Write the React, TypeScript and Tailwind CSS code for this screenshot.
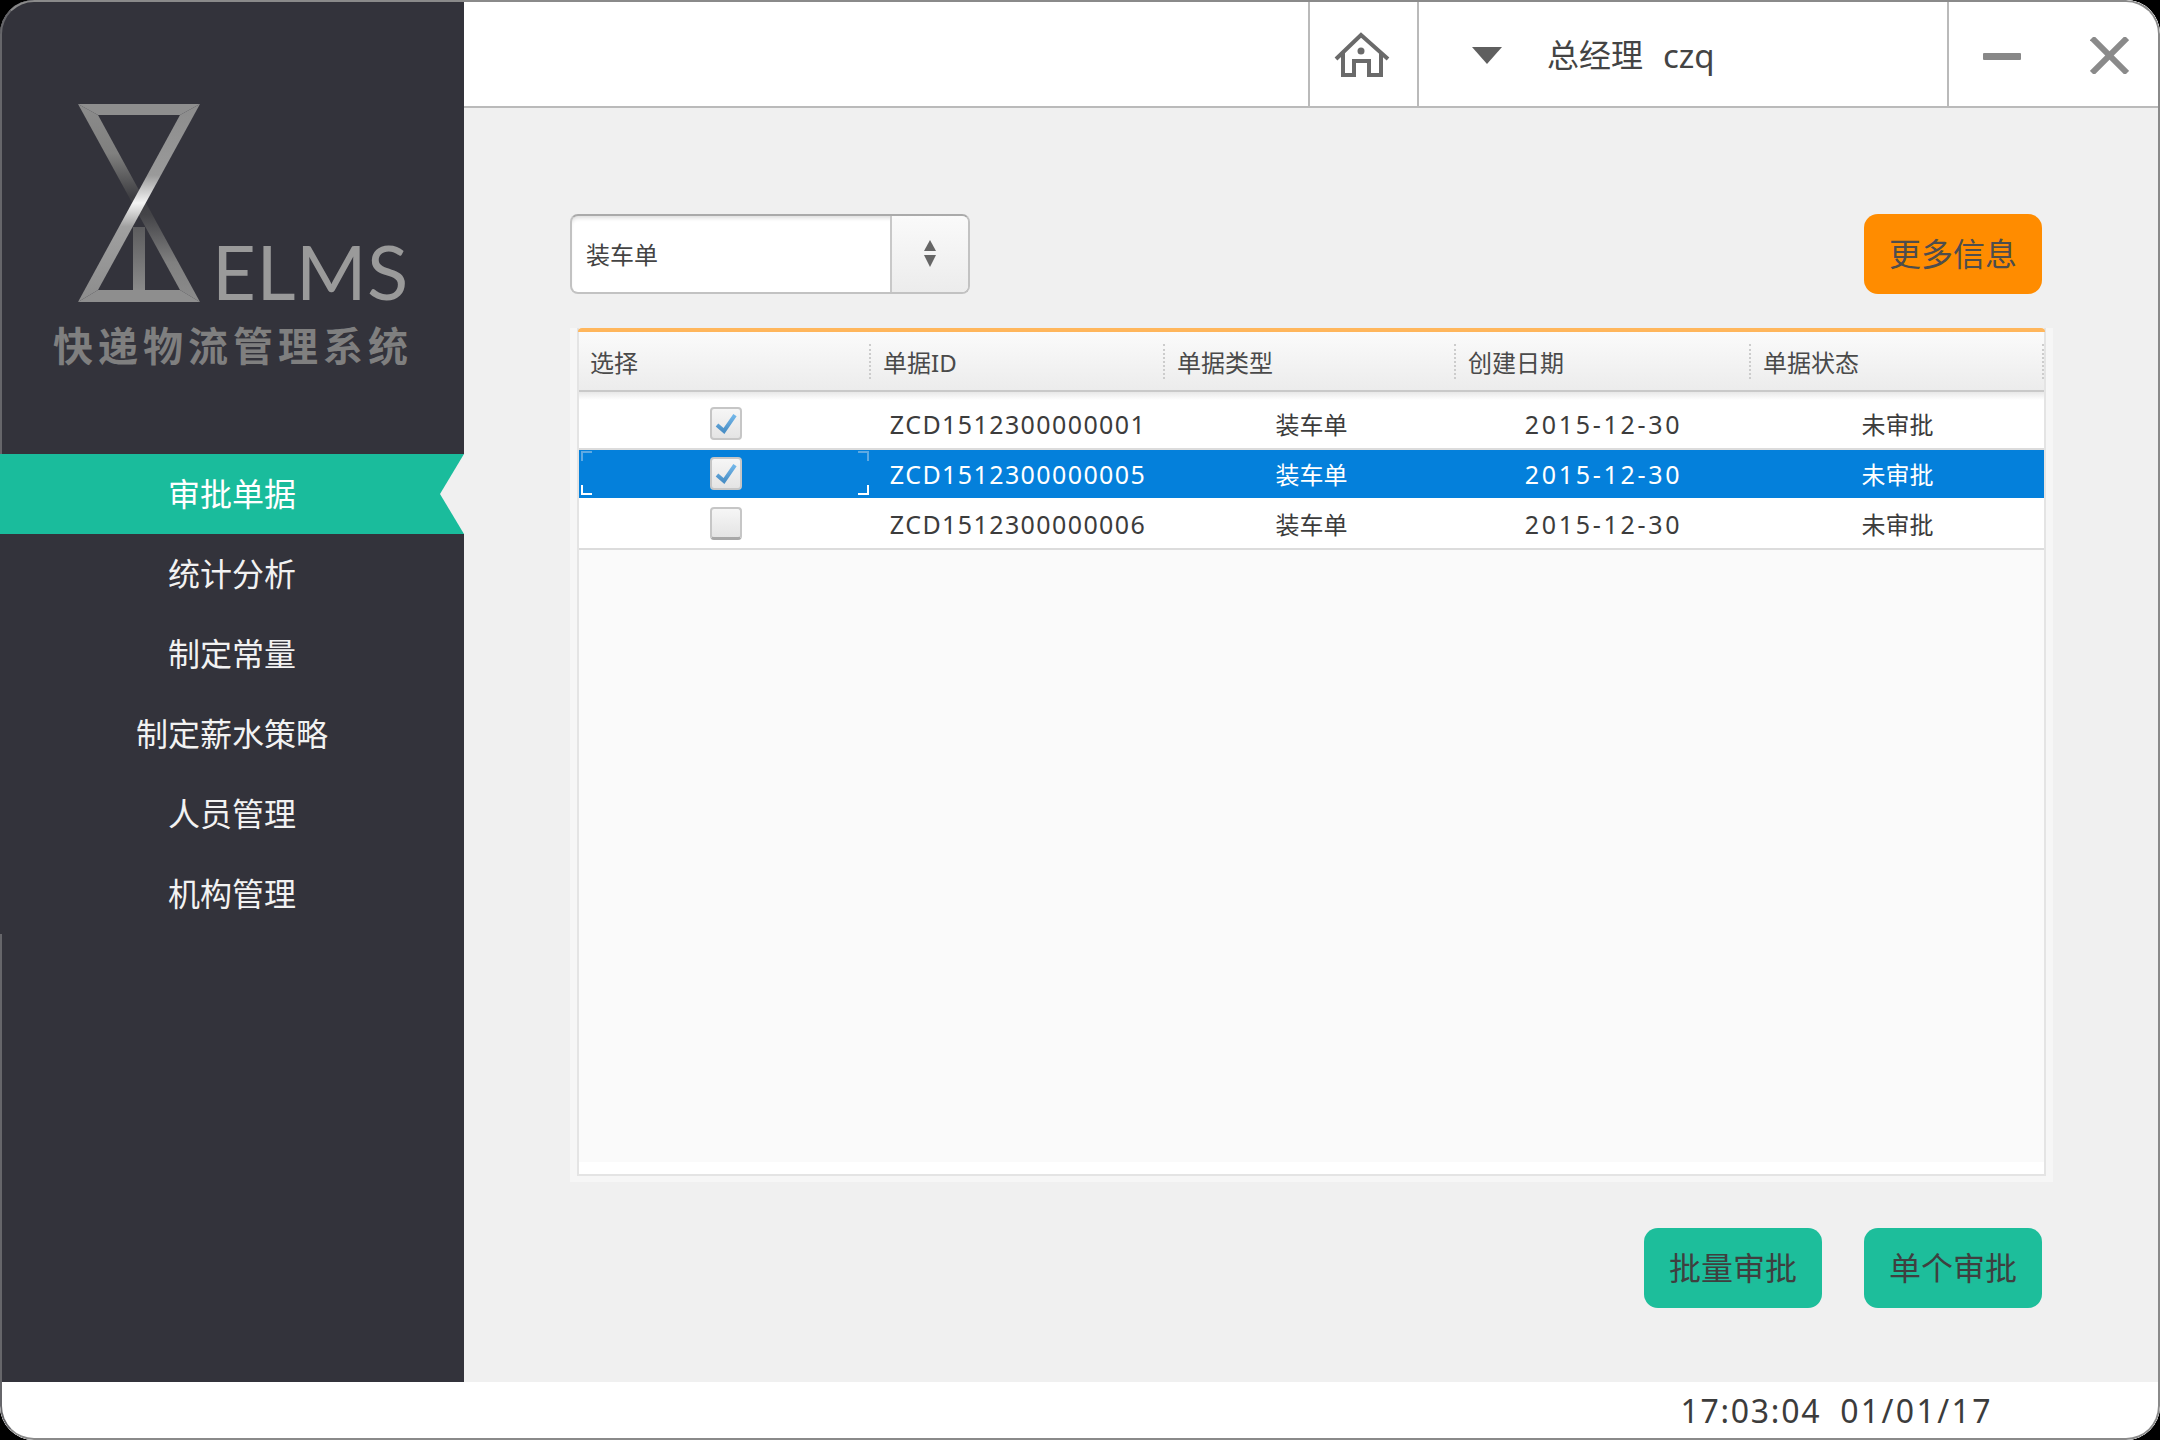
import React from 'react';

const menu = ['审批单据', '统计分析', '制定常量', '制定薪水策略', '人员管理', '机构管理'];

const rows = [
  { id: 'ZCD1512300000001', checked: true, selected: false },
  { id: 'ZCD1512300000005', checked: true, selected: true },
  { id: 'ZCD1512300000006', checked: false, selected: false },
];

function Logo() {
  return (
    <svg width="122" height="198" viewBox="78 104 122 198" className="shrink-0">
      <defs>
        <linearGradient id="bandA" x1="0" y1="104" x2="0" y2="302" gradientUnits="userSpaceOnUse">
          <stop offset="0" stopColor="#8c8c8c" />
          <stop offset="0.36" stopColor="#9a9a9a" />
          <stop offset="0.5" stopColor="#f4f4f4" />
          <stop offset="0.62" stopColor="#a0a0a0" />
          <stop offset="1" stopColor="#8c8c8c" />
        </linearGradient>
        <linearGradient id="bandB" x1="0" y1="104" x2="0" y2="302" gradientUnits="userSpaceOnUse">
          <stop offset="0" stopColor="#8c8c8c" />
          <stop offset="0.25" stopColor="#80807f" />
          <stop offset="0.47" stopColor="#3e3e42" />
          <stop offset="0.56" stopColor="#444448" />
          <stop offset="0.8" stopColor="#808080" />
          <stop offset="1" stopColor="#8c8c8c" />
        </linearGradient>
        <linearGradient id="stem" x1="0" y1="227" x2="0" y2="290" gradientUnits="userSpaceOnUse">
          <stop offset="0" stopColor="#5c5c5e" />
          <stop offset="1" stopColor="#8a8a8a" />
        </linearGradient>
      </defs>
      <polygon points="78,104 98,115 200,302 180,290" fill="url(#bandB)" />
      <rect x="133" y="227" width="12" height="63" fill="url(#stem)" />
      <polygon points="78,104 200,104 180,115 98,115" fill="#8e8e8e" />
      <polygon points="98,290 180,290 200,302 78,302" fill="#8e8e8e" />
      <polygon points="200,104 98,290 78,302 180,115" fill="url(#bandA)" />
    </svg>
  );
}

function HomeIcon() {
  return (
    <svg width="56" height="48" viewBox="0 0 56 48" fill="none" stroke="#6a6a6a" strokeWidth="4">
      <polyline points="2,27 27,3 54,27" />
      <polyline points="9,21 9,43 20,43 20,29 35,29 35,43 47,43 47,21" />
      <circle cx="27" cy="19" r="3.5" fill="#6a6a6a" stroke="none" />
    </svg>
  );
}

function Checkbox({ checked, last }: { checked: boolean; last?: boolean }) {
  return (
    <div
      className={`flex h-[33px] w-[32px] translate-x-[1px] -translate-y-[1px] items-center justify-center rounded-[4px] border-2 border-[#c6c6c6] bg-gradient-to-b from-[#f6f6f6] to-[#e4e4e4] ${last ? 'border-b-[3px] border-b-[#a8a8a8]' : ''}`}
    >
      {checked && (
        <svg width="24" height="24" viewBox="0 0 24 24" fill="none">
          <defs>
            <linearGradient id="tick" x1="0" y1="4" x2="0" y2="20" gradientUnits="userSpaceOnUse">
              <stop offset="0" stopColor="#74b8ea" />
              <stop offset="1" stopColor="#4a8fc6" />
            </linearGradient>
          </defs>
          <polyline points="3,14 10,20 21,4.1" stroke="url(#tick)" strokeWidth="4" />
        </svg>
      )}
    </div>
  );
}

function FocusCorners() {
  return (
    <>
      <span className="absolute left-[2px] top-[1px] h-[10px] w-[11px] border-l-2 border-t-2 border-[#5fa9e2]" />
      <span className="absolute right-[2px] top-[1px] h-[10px] w-[11px] border-r-2 border-t-2 border-[#5fa9e2]" />
      <span className="absolute bottom-[3px] left-[2px] h-[10px] w-[11px] border-b-2 border-l-2 border-white" />
      <span className="absolute bottom-[3px] right-[2px] h-[10px] w-[11px] border-b-2 border-r-2 border-white" />
    </>
  );
}

const headers = ['选择', '单据ID', '单据类型', '创建日期', '单据状态'];

export default function App() {
  return (
    <div className="h-[1440px] w-[2160px] bg-black font-['Noto_Sans','Noto_Sans_CJK_SC',sans-serif]">
      <div className="relative flex h-full flex-col overflow-hidden rounded-[34px] bg-white">
        {/* window frame, the menu sits on top of it */}
        <div className="pointer-events-none absolute inset-0 z-10 rounded-[34px] border-2 border-[#8a8a8a] border-l-[#66666a]" />

        <div className="flex h-[1382px]">
          {/* Sidebar */}
          <div className="flex w-[464px] shrink-0 flex-col bg-[#33333b]">
            <div className="h-[454px] shrink-0 pt-[104px]">
              <div className="flex items-end pl-[78px]">
                <Logo />
                <span className="ml-[12px] h-[56px] -translate-y-[3px] font-['Lato',sans-serif] text-[76px] font-normal leading-[56px] tracking-[0.5px] text-[#9a9a9a]">
                  ELMS
                </span>
              </div>
              <div className="mt-[22px] pl-[2px] text-center text-[40px] font-bold leading-[44px] tracking-[5px] text-[#7f7f7f]">
                快递物流管理系统
              </div>
            </div>
            <div className="relative z-20">
              {menu.map((m, i) => (
                <div
                  key={m}
                  className={`relative flex h-[80px] items-center justify-center text-[32px] text-[#f2f2f2] ${i === 0 ? 'bg-[#1abc9c] text-white' : 'bg-[#33333b]'}`}
                >
                  {m}
                  {i === 0 && (
                    <span className="absolute inset-y-0 right-0 w-[24px] bg-[#f0f0f0] [clip-path:polygon(100%_0,0_50%,100%_100%)]" />
                  )}
                </div>
              ))}
            </div>
          </div>

          {/* Right side */}
          <div className="flex min-w-0 flex-1 flex-col bg-[#f0f0f0]">
            <div className="flex h-[108px] shrink-0 justify-end border-b-2 border-[#bababa] bg-white">
              <div className="flex w-[109px] items-center justify-center border-l-2 border-[#bababa] pr-[3px] pt-[6px]">
                <HomeIcon />
              </div>
              <div className="flex w-[530px] items-center border-l-2 border-[#bababa] pl-[53px] pt-[4px]">
                <span className="h-0 w-0 border-x-[15px] border-t-[17px] border-x-transparent border-t-[#5f5f5f]" />
                <span className="ml-[45px] text-[32px] leading-none text-[#444444]">总经理</span>
                <span className="ml-[20px] text-[33px] leading-none text-[#444444]">czq</span>
              </div>
              <div className="flex w-[213px] items-center border-l-2 border-[#bababa] pl-[34px] pt-[6px]">
                <span className="h-[7px] w-[38px] rounded-[1px] bg-[#888888]" />
                <svg width="39" height="37" viewBox="0 0 39 37" className="ml-[69px] -translate-y-[1px]" stroke="#8a8a8a" strokeWidth="6">
                  <line x1="2" y1="1" x2="37" y2="36" />
                  <line x1="37" y1="1" x2="2" y2="36" />
                </svg>
              </div>
            </div>

            <div className="flex flex-1 flex-col pl-[106px] pt-[106px]">
              <div className="flex w-[1483px] items-start justify-between pr-[11px]">
                {/* Select */}
                <div className="flex h-[80px] w-[400px] overflow-hidden rounded-[8px] border-2 border-[#c2c2c2] border-t-[#aaaaaa] bg-white shadow-[inset_0_4px_4px_-2px_#dcdcdc]">
                  <div className="flex w-[318px] items-center pl-[14px] pt-[2px] text-[24px] text-[#444444]">装车单</div>
                  <div className="flex flex-1 items-center justify-center border-l-2 border-[#c8c8c8] bg-gradient-to-b from-[#fafafa] to-[#ececec]">
                    <svg width="14" height="28" viewBox="0 0 14 28" fill="#666666" className="blur-[0.5px]">
                      <polygon points="7,0 13,11 1,11" />
                      <polygon points="1,15 13,15 7,27" />
                    </svg>
                  </div>
                </div>
                <button className="flex h-[80px] w-[178px] items-center justify-center rounded-[14px] bg-[#ff8c00] text-[32px] text-[#4d4d4d]">
                  更多信息
                </button>
              </div>

              {/* Table panel */}
              <div className="mt-[34px] flex h-[854px] w-[1483px] flex-col bg-[#f6f6f6] px-[7px] pb-[6px]">
                <div className="flex flex-1 flex-col border-x-2 border-b-2 border-[#e4e4e4] bg-[#fafafa]">
                  <div className="-mx-[1px] h-[4px] shrink-0 rounded-t-[6px] bg-[#ffb65c]" />
                  <div className="grid h-[60px] shrink-0 grid-cols-[292px_294px_291px_295px_1fr] items-center border-b-2 border-[#c9c9c9] bg-gradient-to-b from-[#fbfbfb] to-[#ececec]">
                    {headers.map((h, i) => (
                      <div
                        key={h}
                        className={`flex h-[35px] items-center border-r-2 border-dotted border-[#cccccc] pt-[4px] text-[24px] leading-none text-[#4a4a4a] ${i === 0 ? 'border-r-0 pl-[11px]' : 'border-l-0 pl-[12px]'}`}
                      >
                        {h}
                      </div>
                    ))}
                  </div>
                  <div className="h-[8px] shrink-0 bg-gradient-to-b from-[#e8e8e8] to-white" />
                  {rows.map((r, i) => {
                    const text = r.selected ? 'text-white' : 'text-[#3c3c3c]';
                    return (
                      <div
                        key={r.id}
                        className={`grid h-[50px] shrink-0 grid-cols-[292px_294px_291px_295px_1fr] items-center border-b-2 text-[24px] ${text} ${r.selected ? 'border-white bg-[#0480db]' : 'border-[#dcdcdc] bg-white'}`}
                      >
                        <div className="relative flex h-full items-center justify-center">
                          <Checkbox checked={r.checked} last={i === 2} />
                          {r.selected && <FocusCorners />}
                        </div>
                        <div className="pt-[1px] text-center text-[25px] tracking-[1.4px]">{r.id}</div>
                        <div className="pl-[2px] pt-[1px] text-center">装车单</div>
                        <div className="pt-[1px] text-center text-[25px] tracking-[2.7px]">2015-12-30</div>
                        <div className="pt-[1px] text-center">未审批</div>
                      </div>
                    );
                  })}
                  <div className="flex-1" />
                  <div className="h-[12px] shrink-0 bg-white" />
                </div>
              </div>

              <div className="mt-[46px] flex w-[1483px] justify-end gap-[42px] pr-[11px]">
                <button className="flex h-[80px] w-[178px] items-center justify-center rounded-[14px] bg-[#1dbe9b] text-[32px] text-[#3f3f3f]">
                  批量审批
                </button>
                <button className="flex h-[80px] w-[178px] items-center justify-center rounded-[14px] bg-[#1dbe9b] text-[32px] text-[#3f3f3f]">
                  单个审批
                </button>
              </div>
            </div>
          </div>
        </div>

        {/* Status bar */}
        <div className="flex flex-1 items-center justify-end gap-[19px] bg-white pr-[167px] text-[32px] tracking-[1.7px] text-[#3c3c3c]">
          <span>17:03:04</span>
          <span className="tracking-[2.4px]">01/01/17</span>
        </div>
      </div>
    </div>
  );
}
